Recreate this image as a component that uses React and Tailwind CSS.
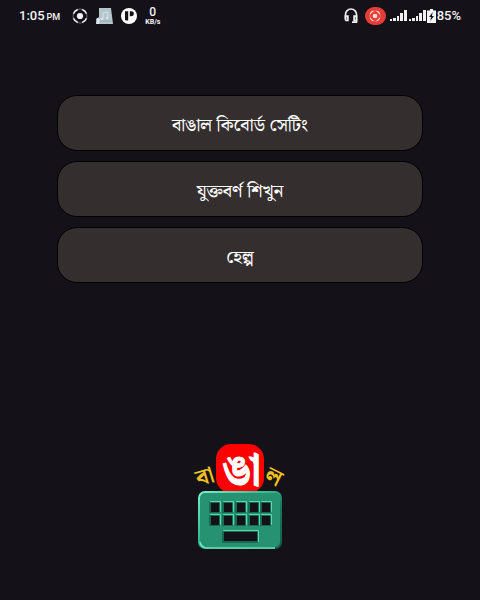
const menuItems = ["বাঙাল কিবোর্ড সেটিং", "যুক্তবর্ণ শিখুন", "হেল্প"];

const keyColumns = [30, 43, 56, 69, 81];
const keyRows = [67, 80];

function RecordIcon({ className }) {
  return (
    <svg viewBox="0 0 16 16" className={className} fill="none" stroke="currentColor" strokeWidth="1.5" aria-hidden="true">
      <circle cx="8" cy="8" r="3.1" fill="currentColor" stroke="none" />
      <path d="M5.8 1.5A6.8 6.8 0 0 0 1.5 5.8M10.2 1.5a6.8 6.8 0 0 1 4.3 4.3M14.5 10.2a6.8 6.8 0 0 1-4.3 4.3M5.8 14.5a6.8 6.8 0 0 1-4.3-4.3" />
      <path d="M5.8 1.5a6.8 6.8 0 0 1 4.4 0M14.5 5.8a6.8 6.8 0 0 1 0 4.4M10.2 14.5a6.8 6.8 0 0 1-4.4 0M1.5 10.2a6.8 6.8 0 0 1 0-4.4" opacity="0.25" />
    </svg>
  );
}

function MusicThumbnail() {
  return (
    <svg viewBox="0 0 17 17" className="size-[17px]" aria-hidden="true">
      <path d="M3 0h12l2 16H1l-1-5 3-2z" fill="#b4c5cc" />
      <path d="M1 10l3 1-1 5H0z" fill="#dfe8ea" />
      <path d="M7 11V5l5-1v6" fill="none" stroke="#dce8ec" strokeWidth="0.8" />
      <circle cx="6" cy="11" r="1.2" fill="#dce8ec" />
      <circle cx="11" cy="10" r="1.2" fill="#dce8ec" />
      <path d="M4 13h11" stroke="#8fa4ad" strokeWidth="0.8" />
    </svg>
  );
}

function AppBadgeIcon() {
  return (
    <svg viewBox="0 0 16 16" className="size-4" aria-hidden="true">
      <circle cx="8" cy="8" r="8" fill="#fff" />
      <path d="M4 3.2h3.2v9.4H5.4A1.4 1.4 0 0 1 4 11.2z" fill="#141118" />
      <path d="M8.8 3.2h1.6a2.5 2.5 0 0 1 0 5H8.8z" fill="#141118" />
    </svg>
  );
}

function HeadsetIcon() {
  return (
    <svg viewBox="0 0 14 16" className="h-4 w-3.5" fill="none" stroke="#f0f0f0" strokeWidth="1.7" aria-hidden="true">
      <path d="M1.5 11V6.5a5.5 5.5 0 0 1 11 0v7.7H8" />
      <path d="M1.5 8.2h2.4v4.3H2.5a1 1 0 0 1-1-1zM12.5 8.2h-2.4v4.3h2.4z" />
    </svg>
  );
}

function SignalIcon() {
  return (
    <svg viewBox="0 0 18 12" className="h-3 w-[18px]" fill="#f1f1f1" aria-hidden="true">
      <rect x="0" y="9" width="2" height="2" />
      <rect x="3" y="8" width="3" height="3" />
      <rect x="7" y="6" width="2" height="5" />
      <rect x="10" y="3" width="3" height="8" />
      <rect x="14" y="0" width="3" height="11" />
    </svg>
  );
}

function BatteryIcon() {
  return (
    <svg viewBox="0 0 9 14" className="h-3.5 w-[9px]" aria-hidden="true">
      <path d="M3 0h3v1.4h3V14H0V1.4h3z" fill="#f5f5f5" />
      <path d="M5.8 3L2 8h2.1L3.2 12 7 7H4.9z" fill="#141118" />
    </svg>
  );
}

function StatusBar() {
  return (
    <header className="flex h-8 items-center justify-between px-[19px] font-[Roboto,sans-serif] text-[#f4f4f4]">
      <div className="flex items-center">
        <span className="text-[13px] font-medium leading-4">1:05</span>
        <span className="ml-0.5 pt-0.5 text-[9px] font-medium leading-3">PM</span>
        <RecordIcon className="ml-3 size-4" />
        <span className="ml-2">
          <MusicThumbnail />
        </span>
        <span className="ml-2">
          <AppBadgeIcon />
        </span>
        <div className="ml-2 flex flex-col items-center">
          <span className="text-xs font-medium leading-3">0</span>
          <span className="text-[7px] font-bold leading-2">KB/s</span>
        </div>
      </div>
      <div className="flex items-center">
        <HeadsetIcon />
        <span className="ml-[7px] mr-1 flex h-[18px] w-[21px] items-center justify-center rounded-full bg-[#e43d35]">
          <RecordIcon className="size-3 text-[#ffd9d5]" />
        </span>
        <SignalIcon />
        <span className="ml-px flex">
          <SignalIcon />
        </span>
        <BatteryIcon />
        <span className="ml-px text-[13px] font-medium leading-4">85%</span>
      </div>
    </header>
  );
}

function KeyboardLogo() {
  return (
    <svg viewBox="0 0 120 120" className="size-[120px]" role="img" aria-label="বাঙাল">
      <defs>
        <linearGradient id="edge" x1="0" y1="0" x2="1" y2="1">
          <stop offset="0" stopColor="#7af0ca" />
          <stop offset="0.45" stopColor="#2fb58b" />
          <stop offset="0.6" stopColor="#1b7a5d" />
          <stop offset="1" stopColor="#135e47" />
        </linearGradient>
      </defs>
      <rect x="36" y="9" width="48" height="49" rx="15" fill="#fe0000" />
      <g className="font-['Noto_Serif_Bengali','Noto_Sans_Bengali',serif] font-bold" textAnchor="middle">
        <text x="62" y="50" fontSize="44" fill="#fff" stroke="#fff" strokeWidth="1">ঙা</text>
        <text x="25" y="49" fontSize="23" fill="#f0c020" transform="rotate(-17 25 42)">বা</text>
        <text x="94" y="49" fontSize="23" fill="#f0c020" transform="rotate(27 94 42)">ল</text>
      </g>
      <rect x="19" y="57" width="82" height="56" rx="6" fill="#269272" stroke="url(#edge)" strokeWidth="2" />
      <path d="M20 107q1 5 6 6h69" fill="none" stroke="#6fe6c0" strokeWidth="1.6" />
      {keyRows.map((y) =>
        keyColumns.map((x) => (
          <g key={`${x}-${y}`}>
            <rect x={x} y={y - 1} width="11" height="11" rx="1" fill="#58dab1" />
            <rect x={x - 1} y={y} width="11" height="11" rx="1" fill="#176a51" />
            <rect x={x + 1} y={y + 1} width="8" height="9" fill="#141118" />
          </g>
        ))
      )}
      <rect x="43" y="95" width="36" height="12" rx="1" fill="#58dab1" />
      <rect x="42" y="96" width="36" height="12" rx="1" fill="#176a51" />
      <rect x="44" y="97" width="33" height="9" fill="#141118" />
    </svg>
  );
}

export default function App() {
  return (
    <div className="flex min-h-screen flex-col bg-[#141118]">
      <StatusBar />
      <main className="flex flex-1 flex-col">
        <nav className="flex flex-col gap-2.5 px-[57px] pt-[63px]">
          {menuItems.map((label) => (
            <button
              key={label}
              type="button"
              className="h-14 rounded-[20px] border border-black bg-[#352e2e] pt-1.5 font-['Noto_Serif_Bengali','Noto_Sans_Bengali',serif] text-lg font-medium leading-6 text-white"
            >
              {label}
            </button>
          ))}
        </nav>
        <div className="mt-auto flex justify-center pb-[45px]">
          <KeyboardLogo />
        </div>
      </main>
    </div>
  );
}
